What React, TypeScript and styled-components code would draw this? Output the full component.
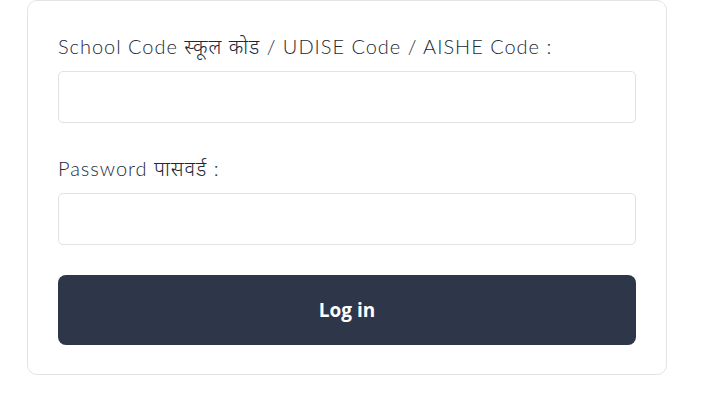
import React from "react";
import styled, { createGlobalStyle } from "styled-components";

const Global = createGlobalStyle`
  html, body { margin: 0; padding: 0; background: #ffffff; }
  * { box-sizing: border-box; }
`;

const Page = styled.div`
  padding: 0 0 0 27px;
`;

const Card = styled.form`
  width: 640px;
  border: 1px solid #e3e3e3;
  border-radius: 10px;
  background: #fff;
  padding: 30px 30px 29px 30px;
  display: flex;
  flex-direction: column;
`;

const Field = styled.div`
  display: flex;
  flex-direction: column;
  gap: 10px;
  margin-bottom: 30px;
`;

const Label = styled.label`
  font-family: "Lato", "Noto Sans", sans-serif;
  font-weight: 300;
  font-size: 20px;
  line-height: 30px;
  color: #232835;
  letter-spacing: 0.98px;
`;

const Input = styled.input`
  height: 52px;
  width: 100%;
  border: 1px solid #dfe2e6;
  border-radius: 5px;
  background: #fff;
  outline: none;
  font-size: 18px;
`;

const Button = styled.button`
  height: 70px;
  width: 100%;
  border: none;
  border-radius: 8px;
  background: #2e3749;
  color: #ffffff;
  font-family: "Open Sans", "Noto Sans", sans-serif;
  font-weight: 700;
  font-size: 19px;
  cursor: pointer;
`;

export default function App() {
  return (
    <Page>
      <Global />
      <Card onSubmit={(e) => e.preventDefault()}>
        <Field>
          <Label>School Code स्कूल कोड / UDISE Code / AISHE Code :</Label>
          <Input type="text" />
        </Field>
        <Field>
          <Label>Password पासवर्ड :</Label>
          <Input type="password" />
        </Field>
        <Button type="submit">Log in</Button>
      </Card>
    </Page>
  );
}
